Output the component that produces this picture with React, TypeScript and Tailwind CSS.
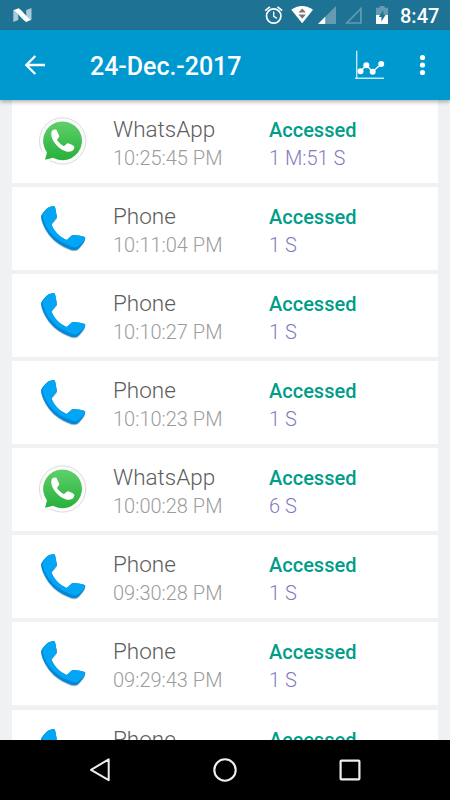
type Entry = { id: number; app: 'WhatsApp' | 'Phone'; time?: string; duration?: string }

const entries: Entry[] = [
  { id: 1, app: 'WhatsApp', time: '10:25:45 PM', duration: '1 M:51 S' },
  { id: 2, app: 'Phone', time: '10:11:04 PM', duration: '1 S' },
  { id: 3, app: 'Phone', time: '10:10:27 PM', duration: '1 S' },
  { id: 4, app: 'Phone', time: '10:10:23 PM', duration: '1 S' },
  { id: 5, app: 'WhatsApp', time: '10:00:28 PM', duration: '6 S' },
  { id: 6, app: 'Phone', time: '09:30:28 PM', duration: '1 S' },
  { id: 7, app: 'Phone', time: '09:29:43 PM', duration: '1 S' },
  { id: 8, app: 'Phone' },
]

function WhatsAppIcon() {
  return (
    <svg viewBox="0 0 48 48" className="size-12">
      <defs>
        <linearGradient id="wa" x1="0" y1="0" x2="0" y2="1">
          <stop offset="0" stopColor="#5fd06a" />
          <stop offset="1" stopColor="#27b03c" />
        </linearGradient>
      </defs>
      <path
        d="M3 34.6A23.2 23.2 0 1 1 12.3 44.2L10.5 44.6"
        fill="#fbfbfb"
        stroke="#dcdcdc"
        strokeWidth="1"
      />
      <path d="M6 42.8 8 35.4A19.4 19.4 0 1 1 14 40.7Z" fill="url(#wa)" />
      <path
        d="M12.5 15C13 13.2 14.5 12.5 16.2 12.6C17.2 12.6 17.6 13.1 18 14L20.2 18.8C20.7 20 18.3 22 18.1 22.8C18 24 22.8 28.3 24.6 28.9C26 29.4 27.4 26.4 28.9 26.3C30 26.3 34.5 28.7 35.2 29.5C35.8 30.7 34.6 33.2 33 34.1C29.8 35.7 25.8 34.4 22.3 32.2C17.2 28.8 11 21.8 12.5 15Z"
        fill="#fff"
      />
    </svg>
  )
}

function PhoneIcon() {
  return (
    <svg viewBox="0 0 48 48" className="size-12 drop-shadow-[0_1px_0.5px_rgba(0,0,0,0.22)]">
      <path
        d="M2 12.7C2.2 10 7.5 4 10.5 3C12 2.4 14.8 1.8 15.7 2.4C16.3 3 17.8 12 17.9 13.5L12.4 20.2C14.5 26.5 20.6 33 27.8 36.1L33.3 31C37 30.8 45 32.4 46.1 33.2C46.6 34.4 45.7 37 44.7 38.5C42.6 41.6 39.7 45.2 37.6 46.1C35.2 46.9 31.6 45.8 29.2 44.7C21.5 41.6 15.7 37.7 11.2 32C6.7 26.5 2.8 19 2 12.7Z"
        fill="#0288d9"
      />
      <path
        d="M3.5 11.3C5 8 8.2 3.9 10.5 3C12 2.4 14.8 1.8 15.7 2.4C16.3 3 17.8 12 17.9 13.5L12.4 20.2C14.5 26.5 20.6 33 27.8 36.1L33.3 31C37 30.8 45 32.4 46.1 33.2C46.6 34.4 44 38 43 39.1C41.6 40.7 38.2 43.7 36.5 43.4C20 39.2 6.2 28.5 3.5 11.3Z"
        fill="#03a5f5"
      />
    </svg>
  )
}

function StatusBar() {
  return (
    <div className="h-[30px] bg-[#1e7294] flex items-center justify-between pl-3 pr-[10px]">
      <svg viewBox="0 0 22 18" className="w-[22px] h-[18px]">
        <path d="M1.3 4.3 6.3 7.5V14L1.3 16Z" fill="#a9cad8" />
        <path d="M14.2 4 19.5 2V13.8L14.2 11.5Z" fill="#a9cad8" />
        <path d="M1.3 4.3 6.7 2.2C12.4 6.4 13 9.9 19.4 13.8L14.2 16C8.2 12.1 7.6 8 1.3 4.3Z" fill="#fff" />
      </svg>
      <div className="flex items-center">
        <svg viewBox="0 0 138 30" className="w-[138px] h-[30px]">
          <g fill="none" stroke="#fff" strokeWidth="1.7">
            <circle cx="13.7" cy="16" r="7.2" />
            <path d="M13.7 11.5V16.4L17 18.4" strokeWidth="1.3" />
            <path d="M5.2 10.7 9.9 6.8M22.2 10.7 17.5 6.8" />
          </g>
          <path d="M31.3 9.8C37.6 4.6 46.7 4.6 53 9.8L42.2 23.3Z" fill="#fff" />
          <path d="M38.5 12.6 42.2 8.5 45.9 12.6ZM38.5 14.6H45.9L42.2 18.8Z" fill="#777" />
          <path d="M76 6V24H58Z" fill="#649bb2" />
          <path d="M65.2 16.8V24H58Z" fill="#fff" />
          <path d="M100.9 8.5V23H86.9Z" fill="none" stroke="#649bb2" strokeWidth="1.7" />
          <path d="M119.7 6H124.6V7.8H128V15H116V7.8H119.7Z" fill="#649bb2" />
          <path d="M116 15H128V24H116Z" fill="#fff" />
          <path d="M123.4 10 118.7 16.9H121.4V21.5L125.7 14.8H123.4Z" fill="#1e7294" />
        </svg>
        <span className="w-[42px] pl-[2px] pt-px text-[20px] leading-[30px] font-medium text-white whitespace-nowrap">8:47</span>
      </div>
    </div>
  )
}

function Toolbar() {
  return (
    <header className="relative z-10 h-[70px] bg-[#0099cf] flex items-center text-white shadow-[0_2px_4px_rgba(0,0,0,0.3)]">
      <svg viewBox="0 0 24 24" className="ml-[23px] size-6" fill="none" stroke="#fff" strokeWidth="2.3">
        <path d="M22 12H3.8M12.3 3 3.3 12 12.3 21" />
      </svg>
      <h1 className="ml-[43px] flex-1 pt-[3px] text-[25px] leading-[30px] font-medium tracking-[-0.05px]">24-Dec.-2017</h1>
      <svg viewBox="0 0 32 32" className="size-8 mr-[32px]" fill="none" stroke="#fff">
        <path d="M3.7 1.7V30M2 29.3H31" stroke="#c5e6f5" strokeWidth="1.4" />
        <path d="M7.5 22.2 13.3 16.2 19.7 22.7 28.2 15" strokeWidth="1.3" />
        <g fill="#fff" stroke="none">
          <circle cx="7.5" cy="22.2" r="3" />
          <circle cx="13.3" cy="16.3" r="3" />
          <circle cx="19.7" cy="22.7" r="3" />
          <circle cx="28.2" cy="15" r="3" />
        </g>
      </svg>
      <svg viewBox="0 0 10 24" className="w-[10px] h-6 mr-[23px]" fill="#fff">
        <circle cx="5.5" cy="4.5" r="2.6" />
        <circle cx="5.5" cy="12" r="2.6" />
        <circle cx="5.5" cy="19.5" r="2.6" />
      </svg>
    </header>
  )
}

function Row({ entry }: { entry: Entry }) {
  return (
    <li className="h-[83px] shrink-0 bg-white flex pl-[27px]">
      <div className="w-[74px] pt-[17px]">
        {entry.app === 'WhatsApp' ? <WhatsAppIcon /> : <PhoneIcon />}
      </div>
      <div className="w-[156px] pt-[15px] font-light">
        <p className="text-[22.5px] leading-[29px] text-[#5c5c5c]">{entry.app}</p>
        {entry.time && <p className="text-[20px] leading-[28px] text-[#9c9c9c]">{entry.time}</p>}
      </div>
      <div className="pt-4 text-[20px] leading-[28px]">
        <p className="font-medium text-[#009d88]">Accessed</p>
        {entry.duration && <p className="font-light text-[#817bbf]">{entry.duration}</p>}
      </div>
    </li>
  )
}

function NavBar() {
  return (
    <nav className="h-[60px] shrink-0 bg-black flex items-center justify-between px-[86px]">
      <svg viewBox="0 0 28 28" className="size-7" fill="none" stroke="#eee" strokeWidth="2" strokeLinejoin="round">
        <path d="M22.7 3.3V24.2L5 13.9Z" />
      </svg>
      <svg viewBox="0 0 28 28" className="size-7" fill="none" stroke="#eee" strokeWidth="2.1">
        <circle cx="14" cy="14" r="10.7" />
      </svg>
      <svg viewBox="0 0 28 28" className="size-7" fill="none" stroke="#eee" strokeWidth="2.2">
        <rect x="4.6" y="4.6" width="18.8" height="18.8" rx="0.8" />
      </svg>
    </nav>
  )
}

export default function App() {
  return (
    <div className="w-[450px] h-[800px] flex flex-col overflow-hidden bg-[#eff1f3] font-['Roboto',sans-serif]">
      <StatusBar />
      <Toolbar />
      <ul className="h-[640px] flex flex-col gap-[4.08px] px-3 overflow-hidden">
        {entries.map((entry) => (
          <Row key={entry.id} entry={entry} />
        ))}
      </ul>
      <NavBar />
    </div>
  )
}
